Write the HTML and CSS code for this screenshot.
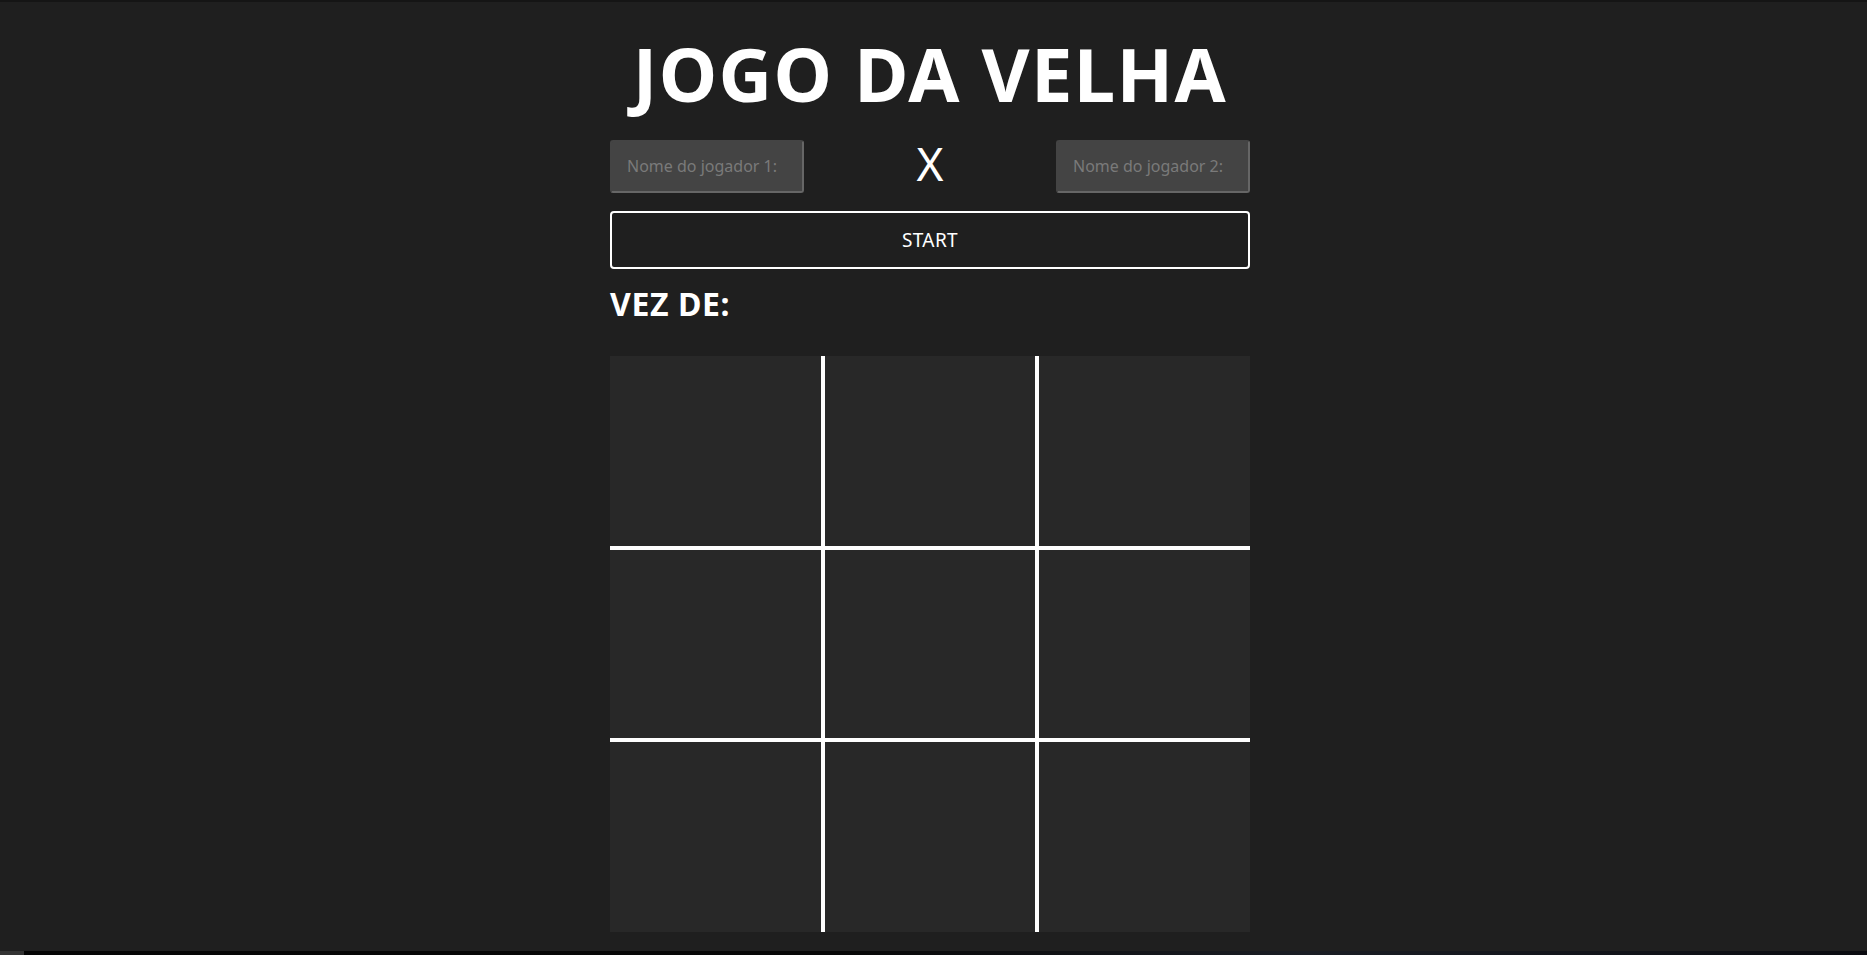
FILE: index.html
```html
<!DOCTYPE html>
<html lang="pt-BR">
<head>
<meta charset="utf-8">
<title>Jogo da Velha</title>
<link rel="stylesheet" href="styles.css">
</head>
<body>
<div class="topbar"></div>
<main class="page">
  <div class="game">
    <h1 class="title">JOGO DA VELHA</h1>
    <div class="players">
      <input class="player-input" type="text" placeholder="Nome do jogador 1:">
      <span class="versus">X</span>
      <input class="player-input" type="text" placeholder="Nome do jogador 2:">
    </div>
    <button class="start-btn" type="button">START</button>
    <h2 class="turn">VEZ DE:</h2>
    <div class="board">
      <div class="cell"></div>
      <div class="cell"></div>
      <div class="cell"></div>
      <div class="cell"></div>
      <div class="cell"></div>
      <div class="cell"></div>
      <div class="cell"></div>
      <div class="cell"></div>
      <div class="cell"></div>
    </div>
  </div>
</main>
<div class="bottombar"><div class="bottom-tab"></div></div>
</body>
</html>
```

FILE: styles.css
```css
* { box-sizing: border-box; }

html, body {
  margin: 0;
  padding: 0;
  height: 100%;
}

body {
  background: #1f1f1f;
  color: #ffffff;
  font-family: "Noto Sans", "Open Sans", sans-serif;
  display: flex;
  flex-direction: column;
  overflow: hidden;
}

.topbar {
  height: 2px;
  background: #151515;
  flex: none;
}

.page {
  flex: 1;
  padding-right: 7px;
}

.game {
  width: 640px;
  margin: 0 auto;
  display: flex;
  flex-direction: column;
}

.title {
  margin: 0;
  padding-top: 35px;
  height: 138px;
  font-size: 74px;
  line-height: 1;
  font-weight: 700;
  text-align: center;
  letter-spacing: 1.4px;
  white-space: nowrap;
}

.players {
  display: flex;
  align-items: center;
  justify-content: space-between;
  height: 53px;
}

.player-input {
  width: 194px;
  height: 53px;
  background: #444444;
  border: 2px solid #444444;
  border-right-color: #666666;
  border-bottom-color: #666666;
  border-radius: 3px;
  padding: 0 0 2px 15px;
  color: #dddddd;
  font-family: inherit;
  font-size: 16px;
  outline: none;
}

.player-input::placeholder {
  color: #7a7a7a;
}

.versus {
  font-size: 46px;
  font-weight: 400;
  line-height: 1;
  padding-bottom: 7px;
}

.start-btn {
  margin-top: 18px;
  height: 58px;
  width: 100%;
  background: #1f1f1f;
  color: #ffffff;
  border: 2px solid #ffffff;
  border-radius: 4px;
  font-family: inherit;
  font-size: 19px;
  letter-spacing: 0.4px;
}

.turn {
  margin: 0;
  padding-top: 16px;
  height: 87px;
  font-size: 32px;
  line-height: 1.2;
  font-weight: 700;
  letter-spacing: 0.6px;
}

.board {
  display: grid;
  grid-template-columns: repeat(3, 1fr);
  grid-template-rows: repeat(3, 192px);
  width: 640px;
}

.cell {
  background: #282828;
  border: 2px solid #ffffff;
}

.cell:nth-child(-n+3) { border-top: none; }
.cell:nth-child(n+7) { border-bottom: none; }
.cell:nth-child(3n+1) { border-left: none; }
.cell:nth-child(3n) { border-right: none; }

.bottombar {
  height: 4px;
  flex: none;
  background: linear-gradient(90deg, #050505 0%, #070707 45%, #1a1d24 70%, #0a0b10 100%);
}

.bottom-tab {
  width: 24px;
  height: 4px;
  background: #333333;
}
```
